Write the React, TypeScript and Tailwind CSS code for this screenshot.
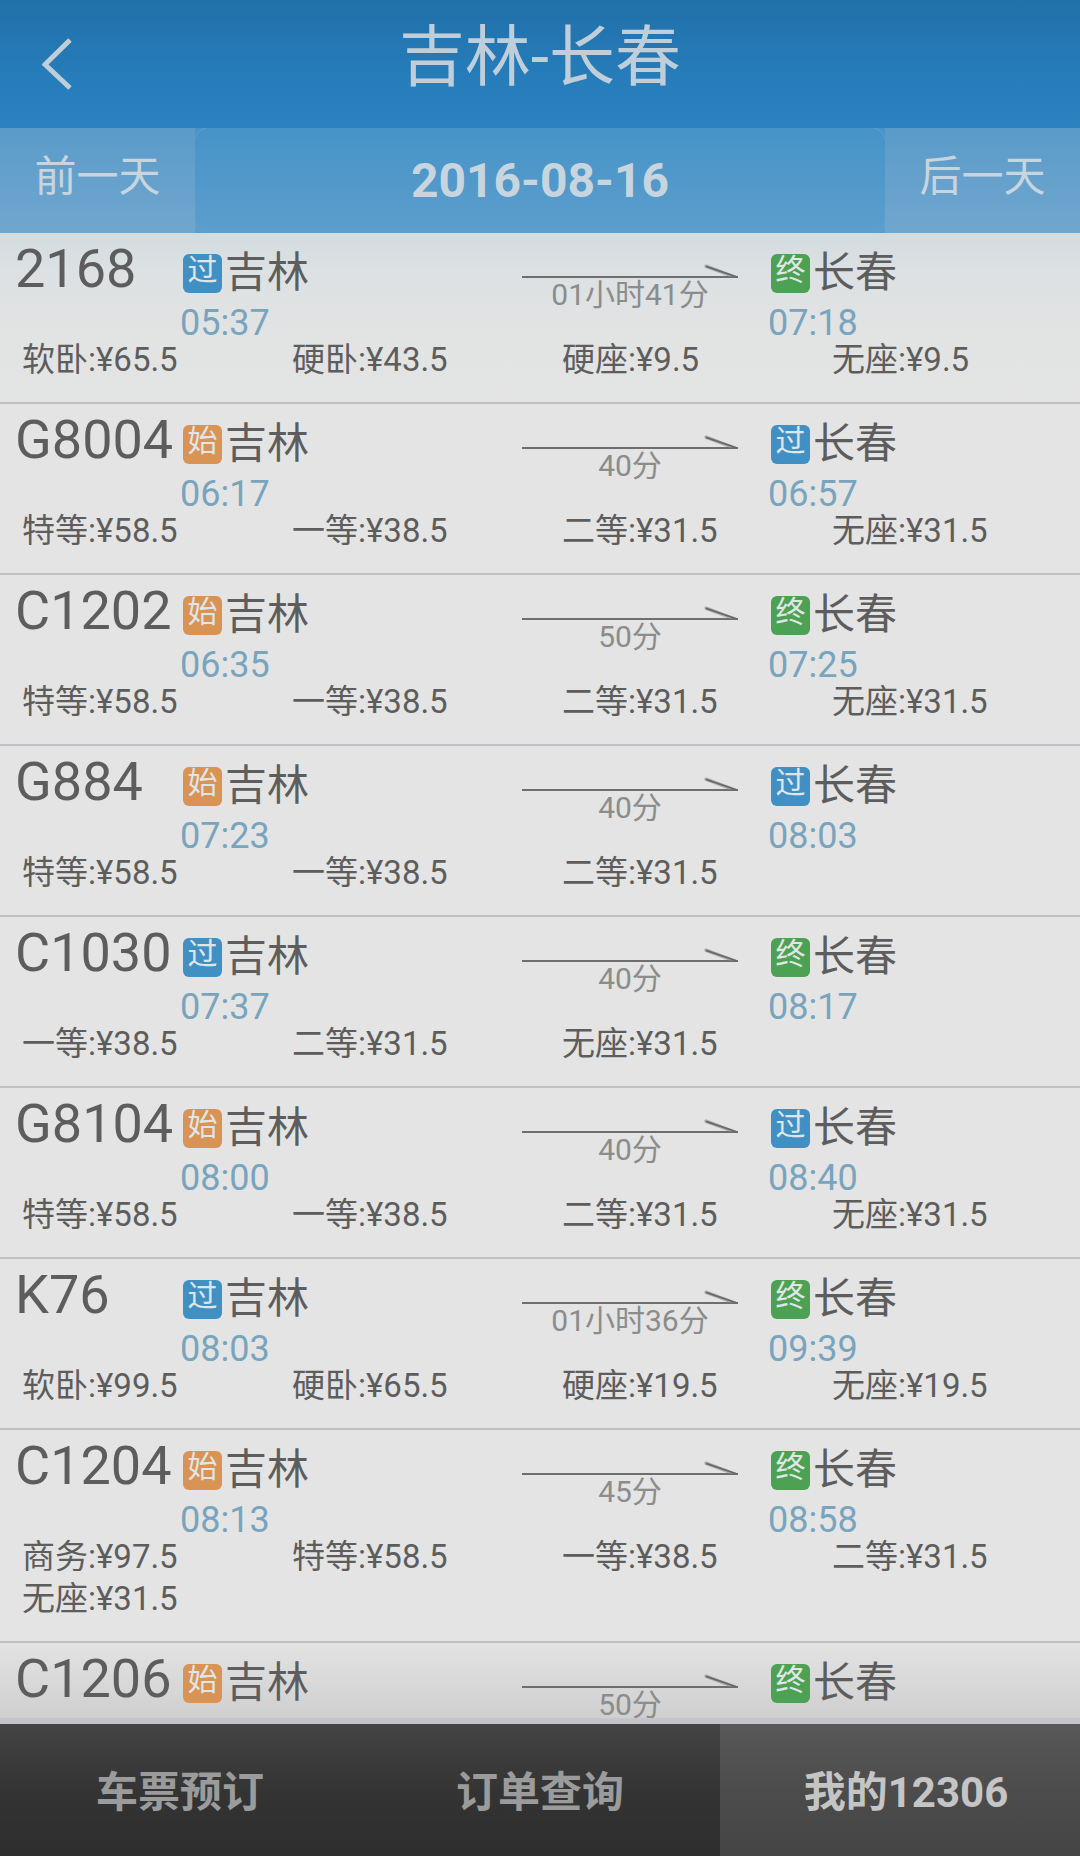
type BadgeKind = '过' | '始' | '终';

type Train = {
  no: string;
  from: BadgeKind;
  depart?: string;
  duration: string;
  to: BadgeKind;
  arrive?: string;
  prices: string[];
};

const trains: Train[] = [
  { no: '2168', from: '过', depart: '05:37', duration: '01小时41分', to: '终', arrive: '07:18', prices: ['软卧:¥65.5', '硬卧:¥43.5', '硬座:¥9.5', '无座:¥9.5'] },
  { no: 'G8004', from: '始', depart: '06:17', duration: '40分', to: '过', arrive: '06:57', prices: ['特等:¥58.5', '一等:¥38.5', '二等:¥31.5', '无座:¥31.5'] },
  { no: 'C1202', from: '始', depart: '06:35', duration: '50分', to: '终', arrive: '07:25', prices: ['特等:¥58.5', '一等:¥38.5', '二等:¥31.5', '无座:¥31.5'] },
  { no: 'G884', from: '始', depart: '07:23', duration: '40分', to: '过', arrive: '08:03', prices: ['特等:¥58.5', '一等:¥38.5', '二等:¥31.5'] },
  { no: 'C1030', from: '过', depart: '07:37', duration: '40分', to: '终', arrive: '08:17', prices: ['一等:¥38.5', '二等:¥31.5', '无座:¥31.5'] },
  { no: 'G8104', from: '始', depart: '08:00', duration: '40分', to: '过', arrive: '08:40', prices: ['特等:¥58.5', '一等:¥38.5', '二等:¥31.5', '无座:¥31.5'] },
  { no: 'K76', from: '过', depart: '08:03', duration: '01小时36分', to: '终', arrive: '09:39', prices: ['软卧:¥99.5', '硬卧:¥65.5', '硬座:¥19.5', '无座:¥19.5'] },
  { no: 'C1204', from: '始', depart: '08:13', duration: '45分', to: '终', arrive: '08:58', prices: ['商务:¥97.5', '特等:¥58.5', '一等:¥38.5', '二等:¥31.5', '无座:¥31.5'] },
  { no: 'C1206', from: '始', duration: '50分', to: '终', prices: [] },
];

const badgeColors: Record<BadgeKind, string> = {
  过: 'bg-[#4090c4]',
  始: 'bg-[#d89355]',
  终: 'bg-[#4da153]',
};

function Stop({ kind, name, time }: { kind: BadgeKind; name: string; time?: string }) {
  return (
    <div className="pt-3">
      <div className="flex h-[57px] items-center gap-[3px] pl-[3px]">
        <span
          className={`h-[39px] w-[39px] shrink-0 rounded-md text-center text-[30px] leading-8 text-[#e0e6e8] ${badgeColors[kind]}`}
        >
          {kind}
        </span>
        <span className="pb-0.5 text-[42px] leading-[54px]">{name}</span>
      </div>
      {time && <time className="mt-[5px] block text-[36px] leading-8 text-[#79a4bd]">{time}</time>}
    </div>
  );
}

function Duration({ text }: { text: string }) {
  return (
    <div className="pt-8 text-center">
      <div className="flex h-[13px] justify-end border-b-2 border-[#6e6e6f]">
        <svg width="34" height="12" viewBox="0 0 34 12" className="shrink-0 overflow-visible" aria-hidden="true">
          <path d="M0 0.5 L2 -0.8 L34 11.5 L26 12 L1 2.8 Z" fill="#8a8c8d" fillOpacity="0.6" />
          <path d="M2 1.4 L33 12" stroke="#66686a" strokeWidth="1.8" />
        </svg>
      </div>
      <div className="mt-[3px] text-[30px] leading-7 whitespace-nowrap text-[#8b8c8c]">{text}</div>
    </div>
  );
}

function TrainRow({ train }: { train: Train }) {
  return (
    <li className="shrink-0 border-b-2 border-[#c0c0c4] pb-[21px]">
      <div className="grid grid-cols-[30fr_57fr_36fr_5fr_52fr]">
        <div className="w-0 pl-[15px] text-[54px] leading-[72px] whitespace-nowrap">{train.no}</div>
        <Stop kind={train.from} name="吉林" time={train.depart} />
        <Duration text={train.duration} />
        <div />
        <Stop kind={train.to} name="长春" time={train.arrive} />
      </div>
      <div className="grid grid-cols-4 text-[33px] leading-[42px]">
        {train.prices.map((price) => (
          <span key={price} className="pl-[22px] whitespace-nowrap">
            {price}
          </span>
        ))}
      </div>
    </li>
  );
}

const cornerBase = 'absolute h-[11px] w-[11px] border-[#6ba5d0]/50';
const corners = [
  'top-0 left-0 rounded-tl-[11px] border-t border-l',
  'top-0 right-0 rounded-tr-[11px] border-t border-r',
  'bottom-0 left-0 rounded-bl-[11px] border-b border-l',
  'right-0 bottom-0 rounded-br-[11px] border-r border-b',
];

const dayButton =
  'w-[195px] shrink-0 bg-linear-to-b from-[#5a9bc9] to-[#70a7cf] pb-2 text-[42px] leading-[54px]';

export default function App() {
  return (
    <div
      lang="zh-CN"
      className="flex h-screen flex-col overflow-hidden font-[Roboto,'Noto_Sans_CJK_SC',sans-serif] text-[#5d5d5d]"
    >
      <header className="relative flex h-32 shrink-0 items-center justify-center bg-linear-to-b from-[#2170a9] via-[#267dba] via-60% to-[#2c81bf] text-[#bfced9]">
        <button type="button" aria-label="返回" className="absolute left-0 flex h-full w-28 items-center pl-[42px]">
          <svg width="30" height="52" viewBox="0 0 30 52" fill="none" aria-hidden="true">
            <path d="M28 2 L3 26.5 L28 50" stroke="currentColor" strokeWidth="5" />
          </svg>
        </button>
        <h1 className="pb-3 text-[66px] leading-[76px] font-normal">吉林-长春</h1>
      </header>

      <div className="flex h-[105px] shrink-0 text-[#c8d5df]">
        <button type="button" className={dayButton}>
          前一天
        </button>
        <button
          type="button"
          className="relative flex-1 bg-linear-to-b from-[#4693c7] to-[#5c9ecd] text-[48px] font-bold"
        >
          {corners.map((corner) => (
            <span key={corner} className={`${cornerBase} ${corner}`} />
          ))}
          2016-08-16
        </button>
        <button type="button" className={dayButton}>
          后一天
        </button>
      </div>

      <main className="min-h-0 flex-1 overflow-hidden border-b-[6px] border-[#c4c4ca] bg-[linear-gradient(to_bottom,#d3dcdf_0,#dde1e3_40px,#e2e3e3_100px,#e4e4e4_200px,#e4e4e4_calc(100%_-_80px),#cfcfcf_100%)]">
        <ul className="flex flex-col">
          {trains.map((train) => (
            <TrainRow key={train.no} train={train} />
          ))}
        </ul>
      </main>

      <nav className="grid h-[132px] shrink-0 grid-cols-3 text-[42px] font-bold text-[#9b9b9b]">
        <button type="button" className="bg-linear-to-b from-[#444444] via-[#343434] to-[#2d2d2d] pt-1">
          车票预订
        </button>
        <button type="button" className="bg-linear-to-b from-[#444444] via-[#343434] to-[#2d2d2d] pt-1">
          订单查询
        </button>
        <button
          type="button"
          aria-current="page"
          className="bg-linear-to-b from-[#585858] via-[#4c4c4c] to-[#454545] pt-1 pl-3 text-[#c5c5c5]"
        >
          我的12306
        </button>
      </nav>
    </div>
  );
}
